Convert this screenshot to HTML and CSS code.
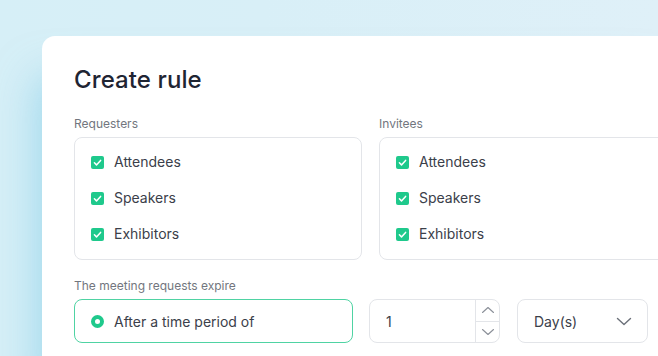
FILE: index.html
```html
<!DOCTYPE html>
<html>
<head>
<meta charset="utf-8">
<link rel="stylesheet" href="styles.css">
</head>
<body>
<div class="card">
  <h1 class="title">Create rule</h1>
  <div class="groups">
    <div class="group">
      <div class="label">Requesters</div>
      <div class="box">
        <div class="item"><span class="check"><svg viewBox="0 0 13 13" width="13" height="13"><path d="M3.4 6.8 L5.5 8.9 L9.6 4.4" fill="none" stroke="#fff" stroke-width="1.5" stroke-linecap="round" stroke-linejoin="round"/></svg></span>Attendees</div>
        <div class="item"><span class="check"><svg viewBox="0 0 13 13" width="13" height="13"><path d="M3.4 6.8 L5.5 8.9 L9.6 4.4" fill="none" stroke="#fff" stroke-width="1.5" stroke-linecap="round" stroke-linejoin="round"/></svg></span>Speakers</div>
        <div class="item"><span class="check"><svg viewBox="0 0 13 13" width="13" height="13"><path d="M3.4 6.8 L5.5 8.9 L9.6 4.4" fill="none" stroke="#fff" stroke-width="1.5" stroke-linecap="round" stroke-linejoin="round"/></svg></span>Exhibitors</div>
      </div>
    </div>
    <div class="group">
      <div class="label">Invitees</div>
      <div class="box">
        <div class="item"><span class="check"><svg viewBox="0 0 13 13" width="13" height="13"><path d="M3.4 6.8 L5.5 8.9 L9.6 4.4" fill="none" stroke="#fff" stroke-width="1.5" stroke-linecap="round" stroke-linejoin="round"/></svg></span>Attendees</div>
        <div class="item"><span class="check"><svg viewBox="0 0 13 13" width="13" height="13"><path d="M3.4 6.8 L5.5 8.9 L9.6 4.4" fill="none" stroke="#fff" stroke-width="1.5" stroke-linecap="round" stroke-linejoin="round"/></svg></span>Speakers</div>
        <div class="item"><span class="check"><svg viewBox="0 0 13 13" width="13" height="13"><path d="M3.4 6.8 L5.5 8.9 L9.6 4.4" fill="none" stroke="#fff" stroke-width="1.5" stroke-linecap="round" stroke-linejoin="round"/></svg></span>Exhibitors</div>
      </div>
    </div>
  </div>
  <div class="label expire">The meeting requests expire</div>
  <div class="row">
    <div class="field radio-field"><span class="radio"></span>After a time period of</div>
    <div class="field number-field">
      <span class="num">1</span>
      <div class="stepper">
        <div class="step"><svg viewBox="0 0 14 8" width="14" height="8"><path d="M1.5 6.5 L7 1.5 L12.5 6.5" fill="none" stroke="#8a8f98" stroke-width="1.1" stroke-linecap="round" stroke-linejoin="round"/></svg></div>
        <div class="step down"><svg viewBox="0 0 14 8" width="14" height="8"><path d="M1.5 1.5 L7 6.5 L12.5 1.5" fill="none" stroke="#8a8f98" stroke-width="1.1" stroke-linecap="round" stroke-linejoin="round"/></svg></div>
      </div>
    </div>
    <div class="field select-field">
      <span>Day(s)</span>
      <svg viewBox="0 0 16 9" width="16" height="9"><path d="M1.5 1.5 L8 7.5 L14.5 1.5" fill="none" stroke="#6b7079" stroke-width="1.4" stroke-linecap="round" stroke-linejoin="round"/></svg>
    </div>
  </div>
</div>
</body>
</html>
```

FILE: styles.css
```css
html, body {
  margin: 0;
  padding: 0;
  width: 658px;
  height: 356px;
  overflow: hidden;
}
body {
  background: linear-gradient(90deg, #d6eff7 0%, #d8eff7 40%, #dff0f8 100%);
  font-family: Inter, "Noto Sans", sans-serif;
  padding-top: 36px;
  padding-left: 42px;
  box-sizing: border-box;
}
.card {
  width: 616px;
  height: 320px;
  overflow: hidden;
  background: #fff;
  border-radius: 13px 0 0 0;
  padding: 28px 0 0 32px;
  box-sizing: border-box;
  box-shadow: -6px 40px 40px rgba(120, 200, 230, 0.55);
}
.title {
  margin: 0;
  font-size: 24px;
  line-height: 32px;
  font-weight: 500;
  color: #1f2533;
  letter-spacing: 0.1px;
}
.groups {
  display: flex;
  gap: 17px;
  margin-top: 20px;
}
.group {
  width: 288px;
  flex: none;
}
.label {
  font-size: 12px;
  line-height: 16px;
  color: #72767e;
  margin-bottom: 5px;
}
.box {
  border: 1px solid #e3e5e9;
  border-radius: 8px;
  padding: 14px 16px 15px;
  display: flex;
  flex-direction: column;
  gap: 16px;
}
.item {
  display: flex;
  align-items: center;
  gap: 10px;
  font-size: 14px;
  line-height: 20px;
  color: #3b404a;
}
.check {
  width: 13px;
  height: 13px;
  border-radius: 2px;
  background: #1fc98c;
  display: flex;
}
.expire {
  margin-top: 18px;
}
.row {
  display: flex;
  gap: 16px;
}
.field {
  flex: none;
  height: 44px;
  box-sizing: border-box;
  border: 1px solid #e3e5e9;
  border-radius: 8px;
  display: flex;
  align-items: center;
  font-size: 14px;
  color: #3b404a;
}
.radio-field {
  width: 279px;
  border-color: #4fd3a3;
  padding-left: 16px;
  gap: 10px;
}
.radio {
  width: 13px;
  height: 13px;
  border-radius: 50%;
  box-sizing: border-box;
  border: 4px solid #1fc98c;
  background: #fff;
}
.number-field {
  width: 131px;
  padding-left: 16px;
  justify-content: space-between;
}
.stepper {
  width: 23px;
  height: 100%;
  border-left: 1px solid #e3e5e9;
  display: flex;
  flex-direction: column;
}
.step {
  flex: 1;
  display: flex;
  align-items: center;
  justify-content: center;
}
.step.down {
  border-top: 1px solid #e3e5e9;
}
.select-field {
  width: 131px;
  margin-left: 1px;
  padding: 0 15px 0 16px;
  justify-content: space-between;
}
```
